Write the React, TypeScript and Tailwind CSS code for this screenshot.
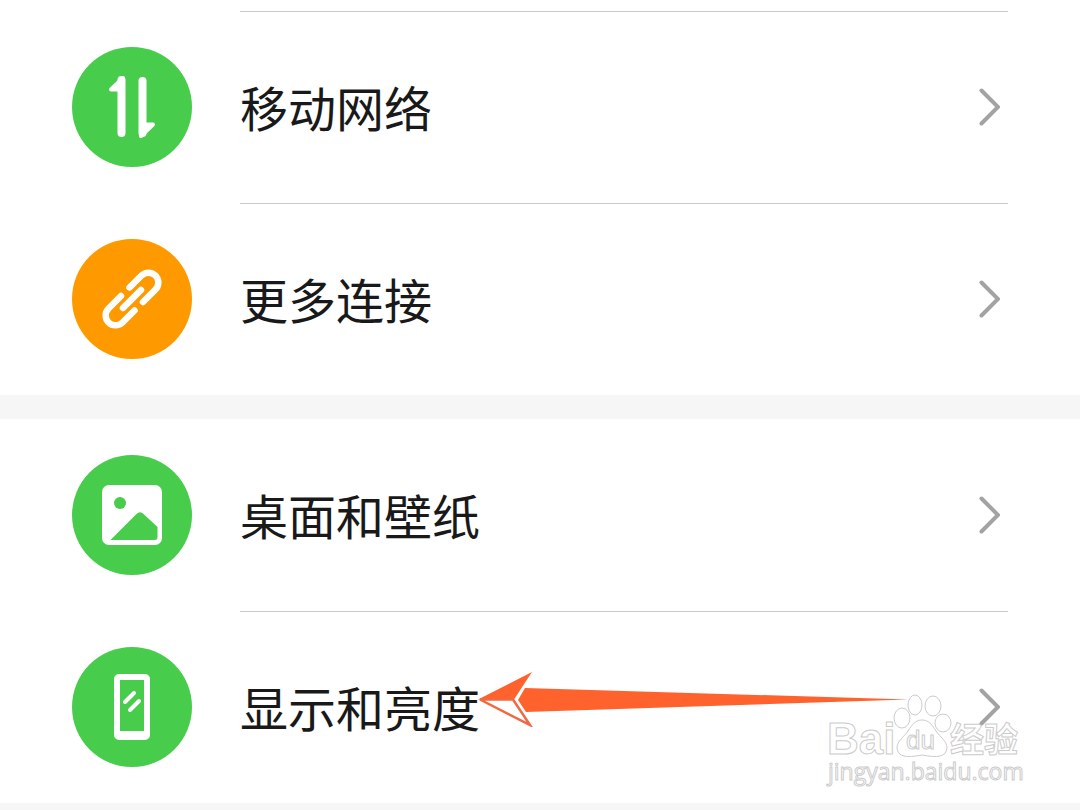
import type { ReactNode } from 'react';

interface SettingsRowProps {
  label: string;
  href: string;
  color: string;
  icon: ReactNode;
}

function MobileNetworkIcon() {
  return (
    <svg viewBox="0 0 120 120" className="size-full" fill="white" stroke="white" strokeLinecap="round" strokeLinejoin="round" aria-hidden="true">
      <path d="M49.500 33v53" strokeWidth="8" />
      <path d="M39 42.500L51 31v11.500z" strokeWidth="4" />
      <path d="M70.500 34v52" strokeWidth="8" />
      <path d="M69 77.500h12L69 89z" strokeWidth="4" />
    </svg>
  );
}

function LinkIcon() {
  return (
    <svg viewBox="0 0 120 120" className="size-full" fill="none" stroke="white" strokeWidth="6.500" strokeLinecap="round" aria-hidden="true">
      <path d="M57.500 48.500L69.500 36.500a9.900 9.900 0 0 1 14 14L71 63" />
      <path d="M49 57L36.500 69.500a9.900 9.900 0 0 0 14 14L62.500 71.500" />
      <path d="M51 69L69 51" />
    </svg>
  );
}

function WallpaperIcon({ color }: { color: string }) {
  return (
    <svg viewBox="0 0 120 120" className="size-full" aria-hidden="true">
      <rect x="30" y="30" width="60" height="60" rx="7" fill="white" />
      <circle cx="48" cy="48" r="6" fill={color} />
      <path d="M38.500 85L64.500 59q3.500-3.500 7 0L85.500 72v10q0 3-3 3z" fill={color} />
    </svg>
  );
}

function DisplayIcon() {
  return (
    <svg viewBox="0 0 120 120" className="size-full" aria-hidden="true">
      <path
        d="M47 27h26a5 5 0 0 1 5 5v56a5 5 0 0 1-5 5H47a5 5 0 0 1-5-5V32a5 5 0 0 1 5-5zM48 33v51h24V33z"
        fill="white"
        fillRule="evenodd"
      />
      <path d="M53 55l9-9M58 63l9-9" stroke="white" strokeWidth="4" strokeLinecap="round" />
    </svg>
  );
}

function Chevron() {
  return (
    <svg viewBox="0 0 24 40" className="h-10 w-6 shrink-0" fill="none" stroke="#a3a3a3" strokeWidth="4" strokeLinecap="round" aria-hidden="true">
      <path d="M5.500 4.500L22 21L5.500 37.500" />
    </svg>
  );
}

function SettingsRow({ label, href, color, icon }: SettingsRowProps) {
  return (
    <a href={href} className="flex h-48 items-center gap-12 px-18">
      <span className={`size-30 shrink-0 rounded-full ${color}`}>{icon}</span>
      <span className="flex flex-1 items-center justify-between self-stretch border-t border-[#c8c8c8] pr-2 pb-1">
        <span className="text-5xl text-[#191919]">{label}</span>
        <Chevron />
      </span>
    </a>
  );
}

function Arrow() {
  return (
    <svg viewBox="0 0 432 56" className="absolute top-15 left-119 h-14 w-108" aria-hidden="true">
      <path d="M49 17L432 28.500L50 41L42 29z" fill="#ff622d" />
      <path d="M2 28.500L56 1L38 28.500z" fill="#ff622d" />
      <path d="M4 28.500L54 54L37 28.500z" fill="white" stroke="#ef6a40" strokeWidth="2.500" />
    </svg>
  );
}

function Watermark() {
  return (
    <svg
      viewBox="0 0 200 100"
      className="absolute right-14 bottom-3 h-25 w-50"
      fill="white"
      fillOpacity="0.75"
      stroke="#cccccc"
      strokeWidth="1"
      fontFamily='"Liberation Sans", "Noto Sans CJK SC", sans-serif'
    >
      <text x="3" y="63" fontSize="44" fontWeight="700">Bai</text>
      <ellipse cx="78" cy="27" rx="8" ry="10" />
      <ellipse cx="91" cy="14" rx="7" ry="10" />
      <ellipse cx="109" cy="15" rx="8" ry="10" />
      <ellipse cx="119" cy="32" rx="8" ry="9" />
      <path d="M98 29c7 0 10 5 14 11s11 10 11 17c-1 9-9 10-25 7-16 3-24 2-25-7 0-7 7-11 11-17s7-11 14-11z" />
      <text x="82" y="58" fontSize="26">du</text>
      <text x="126" y="61" fontSize="34" fontWeight="700">经验</text>
      <text x="4" y="89" fontSize="23" fontFamily='"Open Sans", sans-serif'>jingyan.baidu.com</text>
    </svg>
  );
}

export default function App() {
  return (
    <main className="flex min-h-screen flex-col gap-6 bg-[#f6f6f6] font-['Noto_Sans_CJK_SC',sans-serif]">
      <section className="bg-white pt-[11px]">
        <SettingsRow label="移动网络" href="#network" color="bg-[#47cc4b]" icon={<MobileNetworkIcon />} />
        <SettingsRow label="更多连接" href="#connections" color="bg-[#ff9900]" icon={<LinkIcon />} />
      </section>
      <section className="bg-white [&>a:first-child>span:last-child]:border-transparent">
        <SettingsRow label="桌面和壁纸" href="#wallpaper" color="bg-[#47cc4b]" icon={<WallpaperIcon color="#47cc4b" />} />
        <div className="relative">
          <SettingsRow label="显示和亮度" href="#display" color="bg-[#47cc4b]" icon={<DisplayIcon />} />
          <Arrow />
          <Watermark />
        </div>
      </section>
    </main>
  );
}
